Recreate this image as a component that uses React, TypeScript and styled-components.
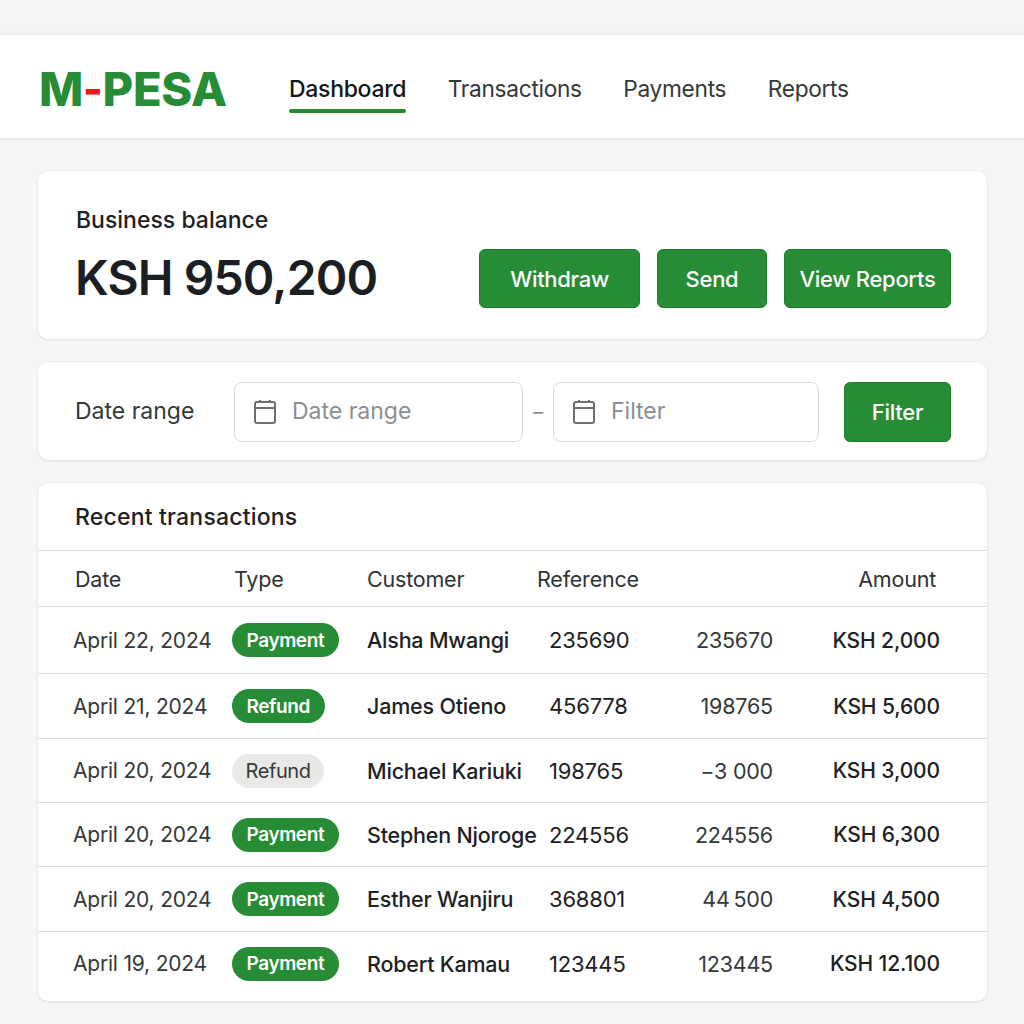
import React from "react";
import styled, { createGlobalStyle } from "styled-components";

const GlobalStyle = createGlobalStyle`
  html, body {
    margin: 0;
    padding: 0;
    background: #f7f6f4;
    font-family: Inter, "Liberation Sans", sans-serif;
    color: #1d2124;
  }
  * { box-sizing: border-box; }
`;

const Page = styled.div`
  width: 1024px;
  height: 1024px;
  padding-top: 34px;
  overflow: hidden;
`;

const Header = styled.header`
  height: 104px;
  background: #fff;
  border-top: 1px solid #ececea;
  box-shadow: 0 1px 4px rgba(0, 0, 0, 0.1);
  display: flex;
  align-items: center;
  padding: 4px 0 0 39px;
`;

const Logo = styled.div`
  width: 250px;
  font-size: 47px;
  font-weight: 800;
  letter-spacing: -0.3px;
  color: #268c35;
  line-height: 1;
  span {
    color: #f01414;
    font-size: 42px;
    vertical-align: 2px;
  }
`;

const Nav = styled.nav`
  display: flex;
  gap: 41.5px;
`;

const NavItem = styled.a<{ $active?: boolean }>`
  position: relative;
  font-size: ${(p) => (p.$active ? "23px" : "22.7px")};
  color: ${(p) => (p.$active ? "#111518" : "#33383b")};
  font-weight: ${(p) => (p.$active ? 500 : 400)};
  letter-spacing: -0.3px;
  &::after {
    content: "";
    display: ${(p) => (p.$active ? "block" : "none")};
    position: absolute;
    left: 0;
    right: 0;
    bottom: -10px;
    height: 4px;
    border-radius: 2px;
    background: #1f8a2e;
  }
`;

const Main = styled.main`
  padding: 33px 37px 0 38px;
  display: flex;
  flex-direction: column;
  gap: 23px;
`;

const Card = styled.section`
  background: #fff;
  border-radius: 10px;
  border: 1px solid #fff;
  box-shadow: 0 0 0 1px rgba(0, 0, 0, 0.025), 0 1px 3px rgba(0, 0, 0, 0.08);
`;

const BalanceCard = styled(Card)`
  height: 168px;
  display: flex;
  align-items: flex-end;
  justify-content: space-between;
  padding: 0 35px 30px 37px;
`;

const BalanceLabel = styled.div`
  font-size: 23px;
  font-weight: 500;
  line-height: 28px;
  margin-bottom: 16px;
`;

const BalanceValue = styled.div`
  font-size: 48px;
  font-weight: 600;
  line-height: 56px;
  letter-spacing: -0.9px;
  color: #1b1f23;
  margin: 0 0 2px -1px;
`;

const Actions = styled.div`
  display: flex;
  gap: 17px;
`;

const GreenButton = styled.button<{ $width: number; $height?: number }>`
  width: ${(p) => p.$width}px;
  height: ${(p) => p.$height ?? 59}px;
  background: #268c35;
  border: 1px solid #1f7e2d;
  border-radius: 6px;
  color: #fff;
  font-family: inherit;
  font-size: 22px;
  font-weight: 500;
  letter-spacing: -0.3px;
  padding: 0;
`;

const FilterCard = styled(Card)`
  height: 98px;
  display: flex;
  align-items: center;
  padding: 2px 35px 0 36px;
`;

const FilterLabel = styled.div`
  width: 159px;
  font-size: 23px;
  color: #33383b;
  margin-top: -2px;
`;

const DateField = styled.div<{ $width: number }>`
  width: ${(p) => p.$width}px;
  height: 60px;
  border: 1px solid #d9d9d7;
  border-radius: 8px;
  display: flex;
  align-items: center;
  gap: 16px;
  padding: 0 0 2px 19px;
  color: #8b8e90;
  font-size: 23px;
  svg { flex-shrink: 0; }
`;

const Dash = styled.div`
  width: 30px;
  text-align: center;
  color: #8b8e90;
  font-size: 20px;
`;

const FilterButton = styled(GreenButton)`
  margin-left: 25px;
`;

const TableCard = styled(Card)`
  height: 518px;
  overflow: hidden;
  border-left: 0;
  border-right: 0;
`;

const TableTitle = styled.div`
  height: 67px;
  padding-left: 37px;
  display: flex;
  align-items: center;
  font-size: 23px;
  font-weight: 500;
  letter-spacing: 0.2px;
  border-bottom: 1px solid #dcdcda;
`;

const Row = styled.div<{ $height: number }>`
  height: ${(p) => p.$height}px;
  display: grid;
  grid-template-columns: 159px 135px 182px 100px 124px 167px;
  align-items: center;
  padding-left: 35px;
  font-size: 22px;
  letter-spacing: -0.2px;
  border-bottom: 1px solid #dcdcda;
  &:last-child { border-bottom: 0; }
`;

const HeadRow = styled(Row)`
  grid-template-columns: 159px 133px 170px 1fr 150px;
  padding-left: 37px;
  padding-right: 51px;
  font-size: 21.5px;
  color: #2e3336;
`;

const Cell = styled.div<{ $right?: boolean }>`
  white-space: nowrap;
  text-align: ${(p) => (p.$right ? "right" : "left")};
`;

const DateCell = styled(Cell)`
  font-size: 21px;
  color: #33383b;
`;

const NameCell = styled(Cell)`
  font-size: 21.5px;
  font-weight: 500;
  letter-spacing: -0.2px;
`;

const OtherCell = styled(Cell)`
  font-size: 21.5px;
  color: #33383b;
`;

const AmountCell = styled(Cell)`
  font-size: 21px;
  font-weight: 500;
  letter-spacing: -0.1px;
`;

const Badge = styled.span<{ $muted?: boolean }>`
  display: inline-flex;
  align-items: center;
  justify-content: center;
  height: 34px;
  padding: 0 ${(p) => (p.$muted ? 13.5 : 14.5)}px;
  border-radius: 17px;
  font-size: ${(p) => (p.$muted ? 20 : 19)}px;
  font-weight: ${(p) => (p.$muted ? 400 : 600)};
  letter-spacing: -0.4px;
  background: ${(p) => (p.$muted ? "#e9e9e8" : "#268c35")};
  color: ${(p) => (p.$muted ? "#33383b" : "#fff")};
`;

const CalendarIcon = () => (
  <svg width="22" height="25" viewBox="0 0 22 25" fill="none" stroke="#6d7072" strokeWidth="2">
    <rect x="1" y="3" width="20" height="21" rx="2" />
    <path d="M1 9h20" />
    <path d="M6 1v3M16 1v3" />
  </svg>
);

type Tx = {
  date: string;
  type: string;
  muted?: boolean;
  customer: string;
  reference: string;
  other: string;
  amount: string;
  height: number;
};

const transactions: Tx[] = [
  { date: "April 22, 2024", type: "Payment", customer: "Alsha Mwangi", reference: "235690", other: "235670", amount: "KSH 2,000", height: 67 },
  { date: "April 21, 2024", type: "Refund", customer: "James Otieno", reference: "456778", other: "198765", amount: "KSH 5,600", height: 65 },
  { date: "April 20, 2024", type: "Refund", muted: true, customer: "Michael Kariuki", reference: "198765", other: "−3 000", amount: "KSH 3,000", height: 64 },
  { date: "April 20, 2024", type: "Payment", customer: "Stephen Njoroge", reference: "224556", other: "224556", amount: "KSH 6,300", height: 64 },
  { date: "April 20, 2024", type: "Payment", customer: "Esther Wanjiru", reference: "368801", other: "44\u2009500", amount: "KSH 4,500", height: 65 },
  { date: "April 19, 2024", type: "Payment", customer: "Robert Kamau", reference: "123445", other: "123445", amount: "KSH 12.100", height: 63 },
];

export default function App() {
  return (
    <Page>
      <GlobalStyle />
      <Header>
        <Logo>
          M<span>-</span>PESA
        </Logo>
        <Nav>
          <NavItem $active>Dashboard</NavItem>
          <NavItem>Transactions</NavItem>
          <NavItem>Payments</NavItem>
          <NavItem>Reports</NavItem>
        </Nav>
      </Header>
      <Main>
        <BalanceCard>
          <div>
            <BalanceLabel>Business balance</BalanceLabel>
            <BalanceValue>KSH 950,200</BalanceValue>
          </div>
          <Actions>
            <GreenButton $width={161}>Withdraw</GreenButton>
            <GreenButton $width={110}>Send</GreenButton>
            <GreenButton $width={167}>View Reports</GreenButton>
          </Actions>
        </BalanceCard>
        <FilterCard>
          <FilterLabel>Date range</FilterLabel>
          <DateField $width={289}>
            <CalendarIcon />
            Date range
          </DateField>
          <Dash>–</Dash>
          <DateField $width={266}>
            <CalendarIcon />
            Filter
          </DateField>
          <FilterButton $width={107} $height={60}>
            Filter
          </FilterButton>
        </FilterCard>
        <TableCard>
          <TableTitle>Recent transactions</TableTitle>
          <HeadRow $height={56}>
            <Cell>Date</Cell>
            <Cell>Type</Cell>
            <Cell>Customer</Cell>
            <Cell>Reference</Cell>
            <Cell $right>Amount</Cell>
          </HeadRow>
          {transactions.map((tx) => (
            <Row key={tx.customer} $height={tx.height}>
              <DateCell>{tx.date}</DateCell>
              <Cell>
                <Badge $muted={tx.muted}>{tx.type}</Badge>
              </Cell>
              <NameCell>{tx.customer}</NameCell>
              <Cell>{tx.reference}</Cell>
              <OtherCell $right>{tx.other}</OtherCell>
              <AmountCell $right>{tx.amount}</AmountCell>
            </Row>
          ))}
        </TableCard>
      </Main>
    </Page>
  );
}
